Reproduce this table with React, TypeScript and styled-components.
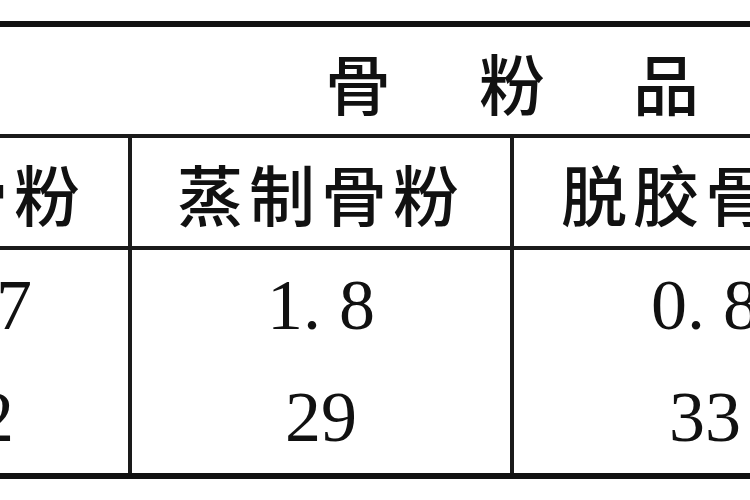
import styled, { createGlobalStyle } from 'styled-components';

const GlobalStyle = createGlobalStyle`
  html, body {
    margin: 0;
    padding: 0;
    background: #fff;
  }
`;

type Row = string[];

const headRow: Row = ['生骨粉', '蒸制骨粉', '脱胶骨粉'];
const dataRows: Row[] = [
  ['1. 7', '1. 8', '0. 8'],
  ['22', '29', '33'],
];

export default function App() {
  return (
    <>
      <GlobalStyle />
      <Page>
        <Table>
          <TitleCell>骨粉品种</TitleCell>
          {headRow.map((name, i) => (
            <NameCell key={name} $last={i === headRow.length - 1}>
              {name}
            </NameCell>
          ))}
          {dataRows.map((row, r) =>
            row.map((value, i) => (
              <ValueCell key={`${r}-${i}`} $last={i === row.length - 1}>
                {value}
              </ValueCell>
            ))
          )}
        </Table>
      </Page>
    </>
  );
}

const Page = styled.div`
  width: 750px;
  height: 500px;
  overflow: hidden;
  padding-top: 21px;
  box-sizing: border-box;
  background: #fff;
`;

const Table = styled.div`
  display: grid;
  grid-template-columns: 304px 382px 382px;
  grid-template-rows: 111px 112px 111.5px 111.5px;
  margin-left: -172px;
  width: 1068px;
  border-top: 6px solid #111;
  border-bottom: 6px solid #111;
  color: #111;
`;

const TitleCell = styled.div`
  grid-column: 1 / -1;
  display: flex;
  align-items: center;
  padding-left: 497px;
  border-bottom: 4px solid #1a1a1a;
  font-family: 'Noto Sans CJK SC', sans-serif;
  font-size: 66px;
  font-weight: 500;
  letter-spacing: 88px;
  white-space: nowrap;
`;

const NameCell = styled.div<{ $last?: boolean }>`
  display: flex;
  align-items: center;
  justify-content: center;
  border-right: ${(p) => (p.$last ? 'none' : '4px solid #1a1a1a')};
  border-bottom: 4px solid #1a1a1a;
  font-family: 'Noto Sans CJK SC', sans-serif;
  font-size: 66px;
  font-weight: 500;
  letter-spacing: 6px;
  white-space: nowrap;
`;

const ValueCell = styled.div<{ $last?: boolean }>`
  display: flex;
  align-items: center;
  justify-content: center;
  border-right: ${(p) => (p.$last ? 'none' : '4px solid #1a1a1a')};
  font-family: 'Liberation Serif', serif;
  font-size: 72px;
  white-space: pre;
`;
